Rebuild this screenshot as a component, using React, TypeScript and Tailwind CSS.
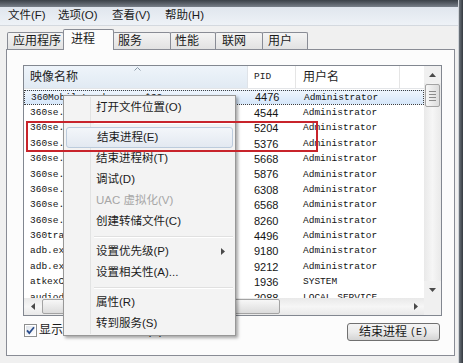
import React from "react";

type Row = { name: string; pid: string; user: string };

const rows: Row[] = [
  { name: "360MobileLoader.exe *32", pid: "4476", user: "Administrator" },
  { name: "360se.exe *32", pid: "4544", user: "Administrator" },
  { name: "360se.exe *32", pid: "5204", user: "Administrator" },
  { name: "360se.exe *32", pid: "5376", user: "Administrator" },
  { name: "360se.exe *32", pid: "5668", user: "Administrator" },
  { name: "360se.exe *32", pid: "5876", user: "Administrator" },
  { name: "360se.exe *32", pid: "6308", user: "Administrator" },
  { name: "360se.exe *32", pid: "6568", user: "Administrator" },
  { name: "360se.exe *32", pid: "8260", user: "Administrator" },
  { name: "360tray.exe *32", pid: "4496", user: "Administrator" },
  { name: "adb.exe *32", pid: "9180", user: "Administrator" },
  { name: "adb.exe *32", pid: "9212", user: "Administrator" },
  { name: "atkexComSvc.exe", pid: "1936", user: "SYSTEM" },
  { name: "audiodg.exe", pid: "2088", user: "LOCAL SERVICE" },
];

type MenuEntry = { label?: string; sep?: boolean; active?: boolean; disabled?: boolean; sub?: boolean };

const menuItems: MenuEntry[] = [
  { label: "打开文件位置(O)" },
  { sep: true },
  { label: "结束进程(E)", active: true },
  { label: "结束进程树(T)" },
  { label: "调试(D)" },
  { label: "UAC 虚拟化(V)", disabled: true },
  { label: "创建转储文件(C)" },
  { sep: true },
  { label: "设置优先级(P)", sub: true },
  { label: "设置相关性(A)..." },
  { sep: true },
  { label: "属性(R)" },
  { label: "转到服务(S)" },
];

const tabs = [
  { label: "应用程序", cls: "w-[57px] pl-[5px]" },
  { label: "进程", cls: "w-[51px] pl-[7px]", active: true },
  { label: "服务", cls: "w-[58px] pl-[4px]" },
  { label: "性能", cls: "w-[46px] pl-[4px]" },
  { label: "联网", cls: "w-[48px] pl-[6px]" },
  { label: "用户", cls: "w-[46px] pl-[5px]" },
];

const ui = "font-['Liberation_Sans','Noto_Sans_CJK_SC',sans-serif]";
const mono = "font-['Liberation_Mono','Noto_Sans_CJK_SC',monospace]";

function Arrow({ dir }: { dir: "up" | "down" | "left" | "right" }) {
  const pts =
    dir === "up" ? "0,4 3.5,0 7,4" : dir === "down" ? "0,0 7,0 3.5,4" : dir === "left" ? "4,0 4,7 0,3.5" : "0,0 4,3.5 0,7";
  const w = dir === "up" || dir === "down" ? 7 : 4;
  const h = dir === "up" || dir === "down" ? 4 : 7;
  return (
    <svg width={w} height={h} viewBox={`0 0 ${w} ${h}`}>
      <polygon points={pts} fill="#4a4a4a" />
    </svg>
  );
}

function VScroll() {
  return (
    <div className="flex w-[17px] flex-col bg-[#f0f0f0]">
      <div className="flex h-[17px] items-center justify-center">
        <Arrow dir="up" />
      </div>
      <div className="flex-1 bg-gradient-to-r from-[#e9e9e9] via-[#f6f6f6] to-[#e9e9e9] pt-px">
        <div className="mx-auto flex h-[23px] w-[15px] flex-col items-center justify-center gap-[2px] rounded-[2px] border border-[#a3a3a3] bg-gradient-to-r from-[#f7f7f7] to-[#dcdcdc]">
          <div className="h-px w-[7px] bg-[#8b8b8b]" />
          <div className="h-px w-[7px] bg-[#8b8b8b]" />
          <div className="h-px w-[7px] bg-[#8b8b8b]" />
          <div className="h-px w-[7px] bg-[#8b8b8b]" />
        </div>
      </div>
      <div className="flex h-[17px] items-center justify-center">
        <Arrow dir="down" />
      </div>
      <div className="h-[17px] bg-[#f0f0f0]" />
    </div>
  );
}

function HScroll() {
  return (
    <div className="flex h-[17px] items-center bg-gradient-to-b from-[#e9e9e9] via-[#f6f6f6] to-[#e9e9e9]">
      <div className="flex h-[17px] w-[17px] items-center justify-center">
        <Arrow dir="left" />
      </div>
      <div className="ml-px h-[15px] w-[238px] rounded-[2px] border border-[#a3a3a3] bg-gradient-to-b from-[#f7f7f7] to-[#dcdcdc]" />
      <div className="flex-1" />
      <div className="flex h-[17px] w-[17px] items-center justify-center">
        <Arrow dir="right" />
      </div>
    </div>
  );
}

function ProcessList() {
  return (
    <div className="flex h-[251px] w-[419px] border border-[#828790] bg-white">
      <div className="flex w-[400px] flex-col">
        <div className={`flex h-[23px] border-b border-[#e3e5e8] text-[12px] text-[#1e1e1e] ${ui}`}>
          <div className="relative flex w-[224px] items-center border-r border-[#dfe3e8] bg-gradient-to-b from-[#eef4fa] to-[#e1eaf3] pl-[6px]">
            映像名称
            <svg className="absolute left-[110px] top-[1px]" width="7" height="4" viewBox="0 0 7 4">
              <polyline points="0.5,3.5 3.5,0.5 6.5,3.5" fill="none" stroke="#8a9aa8" strokeWidth="1" />
            </svg>
          </div>
          <div className={`flex w-[48px] items-center border-r border-[#e5e5e5] pl-[6px] text-[9.5px] ${mono}`}>PID</div>
          <div className="flex w-[104px] items-center border-r border-[#e5e5e5] pl-[7px]">用户名</div>
          <div className="flex-1" />
        </div>
        <div className="h-[209px] overflow-hidden pt-px">
          {rows.map((r, i) => (
            <div
              key={i}
              className={`flex h-[15.4px] items-center text-[#141414] ${
                i === 0 ? "border border-dotted border-[#404040] bg-gradient-to-b from-[#eef5fd] to-[#d6e7fa]" : ""
              }`}
            >
              <div className={`w-[224px] overflow-hidden whitespace-nowrap pl-[6px] text-[9.5px] ${mono}`}>{r.name}</div>
              <div className={`w-[48px] pl-[6px] text-[11px] ${ui}`}>{r.pid}</div>
              <div className={`w-[104px] whitespace-nowrap pl-[7px] text-[9.5px] ${mono}`}>{r.user}</div>
            </div>
          ))}
        </div>
        <HScroll />
      </div>
      <VScroll />
    </div>
  );
}

function ContextMenu() {
  return (
    <div
      className={`absolute left-[63px] top-[95px] w-[173px] border border-[#979797] bg-[#f3f3f3] py-px text-[11.5px] text-[#1b1b1b] shadow-[2px_2px_3px_rgba(0,0,0,0.35)] ${ui}`}
    >
      {menuItems.map((m, i) =>
        m.sep ? (
          <div key={i} className="mx-[2px] flex h-[9px]">
            <div className="w-[25px] border-r border-[#e2e3e3]" />
            <div className="ml-[3px] flex flex-1 flex-col justify-center">
              <div className="h-px bg-[#e0e0e0]" />
              <div className="h-px bg-white" />
            </div>
          </div>
        ) : (
          <div
            key={i}
            className={`mx-[2px] flex h-[21px] items-center ${
              m.active ? "rounded-[3px] border border-[#bccbdc] bg-gradient-to-b from-[#f3f6fa] to-[#e3e9f1]" : ""
            }`}
          >
            <div className={`h-full w-[25px] ${m.active ? "" : "border-r border-[#e2e3e3]"}`} />
            <span className={`pl-[5px] ${m.disabled ? "text-[#a6a6a6]" : ""}`}>{m.label}</span>
            {m.sub ? (
              <span className="ml-auto mr-[8px] flex">
                <Arrow dir="right" />
              </span>
            ) : null}
          </div>
        ),
      )}
    </div>
  );
}

export default function App() {
  return (
    <div className={`relative flex h-[363px] w-[463px] overflow-hidden bg-[#f0f0f0] ${ui}`}>
      <div className="flex w-[458px] flex-col">
        <div className="h-[7px] bg-gradient-to-b from-[#3b4148] to-[#79808a]" />
        <div className="flex h-[18px] items-center bg-gradient-to-b from-[#e0e6ee] to-[#eef2f7] text-[11.5px] text-[#1b1b1b]">
          <span className="ml-[8px] w-[50px]">文件(F)</span>
          <span className="w-[54px]">选项(O)</span>
          <span className="w-[53px]">查看(V)</span>
          <span>帮助(H)</span>
        </div>
        <div className="h-px bg-[#d4d9df]" />
        <div className="relative z-10 flex h-[23px] items-end pl-[7px] text-[12px] text-[#1b1b1b]">
          {tabs.map((t, i) => (
            <div
              key={i}
              className={`${t.cls} ${i > 0 ? "-ml-px" : ""} flex items-center rounded-t-[2px] border border-b-0 border-[#898c95] ${
                t.active
                  ? "relative z-10 -mb-px h-[21px] bg-[#fcfcfc] pb-[2px]"
                  : "h-[17px] bg-gradient-to-b from-[#f4f4f4] to-[#e2e2e2]"
              }`}
            >
              {t.label}
            </div>
          ))}
        </div>
        <div className="ml-[6px] mr-[3px] flex h-[307px] flex-col border border-[#898c95] bg-[#fcfcfc] pl-[16px] pt-[15px]">
          <ProcessList />
          <div className="mt-[7px] flex items-start">
            <div className="ml-px mt-px flex items-center">
              <svg width="13" height="13" viewBox="0 0 13 13">
                <defs>
                  <linearGradient id="cb" x1="0" y1="0" x2="1" y2="1">
                    <stop offset="0" stopColor="#dfe4ea" />
                    <stop offset="1" stopColor="#ffffff" />
                  </linearGradient>
                </defs>
                <rect x="0.5" y="0.5" width="12" height="12" fill="#fff" stroke="#8e8f8f" />
                <rect x="2" y="2" width="9" height="9" fill="url(#cb)" />
                <path d="M3 6.3 L5.3 9 L10 3.3" stroke="#2b4d8c" strokeWidth="1.8" fill="none" />
              </svg>
              <span className="ml-[2px] text-[12px] leading-[13px] text-[#1b1b1b]">显示所有用户的进程(S)</span>
            </div>
            <button className="ml-auto mr-[14px] flex h-[18px] w-[93px] items-center justify-center rounded-[3px] border border-[#707070] bg-gradient-to-b from-[#f4f4f4] via-[#ebebeb] to-[#d4d4d4] text-[12px] text-[#1b1b1b]">
              结束进程<span className={`ml-[3px] text-[10px] ${mono}`}>(E)</span>
            </button>
          </div>
        </div>
        <div className="flex-1" />
      </div>
      <div className="w-[5px] border-l border-[#cfd3d8] bg-gradient-to-r from-[#6e757d] to-[#353a40]" />

      <ContextMenu />
      <div className="absolute left-[26px] top-[121px] h-[31px] w-[292px] border-2 border-[#c8242b]" />
    </div>
  );
}
